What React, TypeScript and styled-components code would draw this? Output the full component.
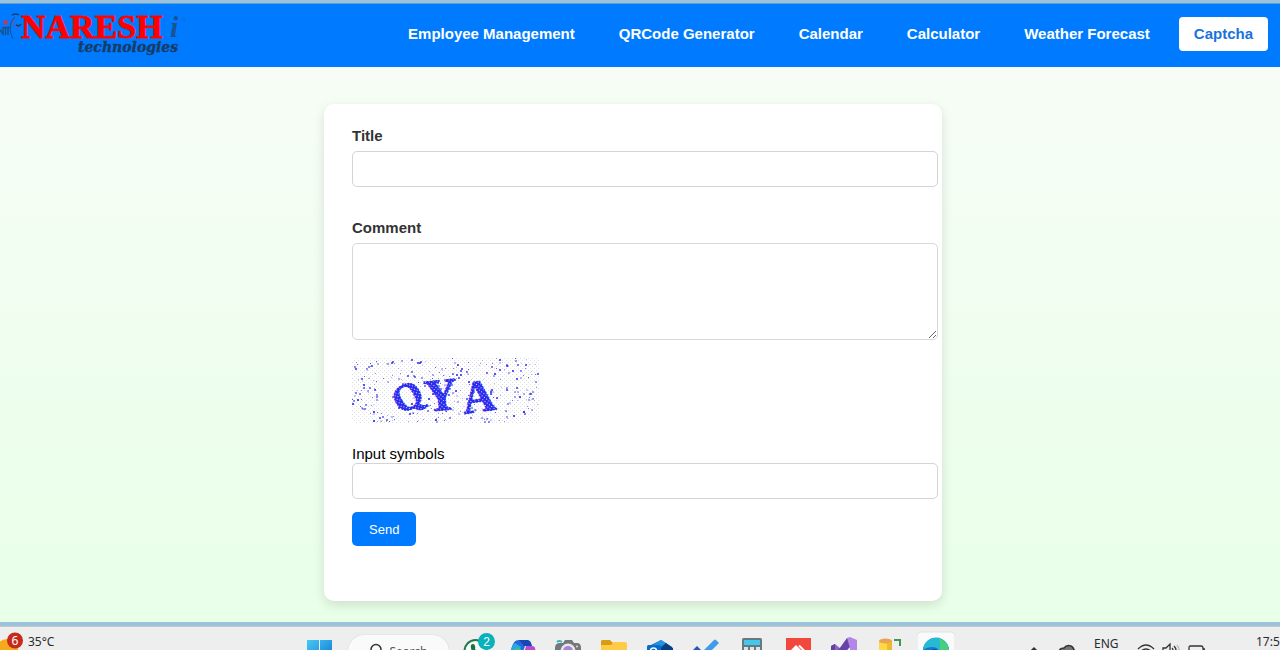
import React from "react";
import styled, { createGlobalStyle } from "styled-components";

const GlobalStyle = createGlobalStyle`
  *, *::before, *::after { box-sizing: border-box; }
  body {
    margin: 0;
    font-family: "Liberation Sans", Arial, sans-serif;
    font-size: 15px;
    color: #000;
  }
`;

const Screen = styled.div`
  min-height: 100vh;
  display: flex;
  flex-direction: column;
  overflow: hidden;
`;

const WindowEdge = styled.div<{ $size: number }>`
  flex: none;
  height: ${(p) => p.$size}px;
  background: #9dc3da;
  border-bottom: 1px solid ${(p) => (p.$size > 4 ? "#c3c8cb" : "#5a9fde")};
`;

const Header = styled.header`
  flex: none;
  display: flex;
  align-items: center;
  justify-content: space-between;
  height: 63px;
  padding-right: 12px;
  background: #007bff;
`;

const Nav = styled.nav`
  display: flex;
  gap: 14px;
  padding-bottom: 4px;
`;

const NavLink = styled.a<{ $active?: boolean }>`
  padding: 0 15px;
  line-height: 34px;
  border-radius: 4px;
  font-weight: bold;
  white-space: nowrap;
  text-decoration: none;
  color: ${(p) => (p.$active ? "#1a73dc" : "#fff")};
  background: ${(p) => (p.$active ? "#fff" : "transparent")};
`;

const Page = styled.main`
  flex: 1;
  padding: 37px 14px 21px 0;
  background: linear-gradient(#f7fdf6, #e8ffe8);
`;

const Card = styled.form`
  display: flex;
  flex-direction: column;
  max-width: 618px;
  min-height: 497px;
  margin: 0 auto;
  padding: 23px 4px 55px 28px;
  border-radius: 10px;
  background: #fff;
  box-shadow: 0 4px 12px rgba(0, 0, 0, 0.12);
`;

const Field = styled.div<{ $after: number }>`
  display: flex;
  flex-direction: column;
  margin-bottom: ${(p) => p.$after}px;
`;

const Label = styled.label<{ $strong?: boolean }>`
  line-height: 17px;
  margin-bottom: ${(p) => (p.$strong ? 7 : 1)}px;
  font-weight: ${(p) => (p.$strong ? "bold" : "normal")};
  color: ${(p) => (p.$strong ? "#333" : "#000")};
`;

const TextInput = styled.input`
  width: 100%;
  height: 36px;
  padding: 8px;
  border: 1px solid #d4d4d7;
  border-radius: 5px;
  background: #fff;
  font: inherit;
`;

const TextArea = styled.textarea`
  display: block;
  width: 100%;
  height: 97px;
  padding: 8px;
  border: 1px solid #d8d8dc;
  border-radius: 5px;
  font: inherit;
  resize: vertical;
`;

const CaptchaImage = styled.svg`
  display: block;
  width: 188px;
  height: 66px;
  margin-bottom: 21px;
`;

const SendButton = styled.button`
  align-self: flex-start;
  height: 34px;
  padding: 0 17px;
  border: 0;
  border-radius: 5px;
  background: #007bff;
  color: #fff;
  font-family: inherit;
  font-size: 13px;
`;

const Taskbar = styled.footer`
  flex: none;
  display: flex;
  align-items: flex-start;
  height: 23px;
  overflow: hidden;
  background: #eee;
  color: #2b2b2b;
  font-family: "Noto Sans", "Open Sans", sans-serif;
  font-size: 12px;
`;

const Weather = styled.div`
  flex: 300 1 0;
  display: flex;
  gap: 4px;
  line-height: 30px;
`;

const Apps = styled.div`
  flex: none;
  display: flex;
  gap: 8px;
`;

const AppButton = styled.button`
  width: 38px;
  height: 40px;
  padding: 0;
  border: 0;
  background: none;
`;

const SearchPill = styled.label`
  display: flex;
  align-items: flex-start;
  gap: 6px;
  width: 101px;
  height: 32px;
  margin: 8px 0 0 2px;
  padding: 8px 10px 0 20px;
  border-radius: 16px;
  background: #fafafa;
  box-shadow: 0 0 1px #bbb;
`;

const SearchInput = styled.input`
  width: 60px;
  height: 16px;
  padding: 0;
  border: 0;
  background: none;
  font: inherit;
  color: #555;
  &::placeholder { color: #555; }
`;

const Tray = styled.div`
  flex: 326 1 0;
  display: flex;
  justify-content: flex-end;
  line-height: 34px;
  white-space: nowrap;
`;

const Language = styled.span`
  width: 26px;
  margin: 0 17px 0 19px;
`;

const Clock = styled.time`
  width: 24px;
  margin-left: 51px;
  line-height: 30px;
  overflow: hidden;
`;

const Glyph = styled.svg`
  display: block;
  flex: none;
`;

function Logo() {
  return (
    <Glyph width="190" height="63" viewBox="0 4 190 63" role="img" aria-label="Naresh i Technologies">
      <g fill="none" stroke="#17508c" strokeWidth="1.500">
        <path d="M-2 34V27l5 7V27M3 27.500h7M5.500 28v7M8 28v7" />
        <path d="M15 17c-6 5-6 14-2 22" strokeWidth="1" />
        <path d="M12 15q4-2 7 0" stroke="#123d70" />
        <path d="M16 25l3 1 2-2" stroke="#123d70" />
      </g>
      <path d="M3.500 20.500h4.500v4H3.500z" fill="#b63a62" />
      <path d="M12 22l2 3M14 19v3M15 27l3 1" stroke="#a04478" fill="none" />
      <text x="21" y="38" fill="#ff0000" stroke="#ff0000" strokeWidth="0.800" fontFamily="Liberation Serif, serif" fontWeight="bold" fontSize="34">NARESH</text>
      <text x="170" y="37" fill="#175593" fontFamily="Liberation Serif, serif" fontWeight="bold" fontStyle="italic" fontSize="30">i</text>
      <circle cx="183.500" cy="19.500" r="1.500" fill="none" stroke="#1767b8" strokeWidth="0.800" />
      <text x="78" y="52" fill="#183c68" stroke="#183c68" strokeWidth="0.400" fontFamily="DejaVu Serif, serif" fontWeight="bold" fontStyle="italic" fontSize="14">technologies</text>
    </Glyph>
  );
}

type Speck = { x: number; y: number; size: number; opacity: number };

// Small seeded generator so that the noise is the same on each render.
function makeSpecks(count: number): Speck[] {
  let seed = 90217;
  const next = () => {
    seed = (seed * 16807) % 2147483647;
    return seed / 2147483647;
  };
  return Array.from({ length: count }, () => ({
    x: Math.floor(next() * 186),
    y: Math.floor(next() * 64),
    size: next() > 0.5 ? 2 : 1,
    opacity: 0.2 + next() * 0.6,
  }));
}

const specks = makeSpecks(330);

function Captcha() {
  return (
    <CaptchaImage viewBox="0 0 188 66" role="img" aria-label="Captcha symbols">
      <defs>
        <pattern id="grain" width="4" height="4" patternUnits="userSpaceOnUse">
          <path d="M0 0h1v1H0zM2 2h1v1H2z" fill="#dedee6" />
        </pattern>
        <pattern id="weave" width="4" height="4" patternUnits="userSpaceOnUse">
          <path d="M0 0h4v4H0z" fill="#2a2af0" />
          <path d="M0 0h1v1H0zM2 2h1v1H2z" fill="#dcdcff" />
        </pattern>
      </defs>
      <rect width="188" height="66" rx="5" fill="url(#grain)" />
      {specks.map((s, i) => (
        <rect key={i} x={s.x} y={s.y} width={s.size} height={s.size} fill="#2424e6" opacity={s.opacity} />
      ))}
      <g fill="url(#weave)" stroke="#2424e6" strokeWidth="1" strokeDasharray="2 1" fontFamily="Liberation Serif, serif" fontWeight="bold">
        <text fontSize="38" transform="translate(49 57) rotate(-30)">Q</text>
        <text fontSize="46" transform="translate(74 54) rotate(-6)">Y</text>
        <text fontSize="46" transform="translate(112 56) rotate(-8)">A</text>
      </g>
    </CaptchaImage>
  );
}

const appIcons: { name: string; art: React.ReactNode }[] = [
  {
    name: "WhatsApp",
    art: (
      <>
        <circle cx="18.500" cy="24" r="11" fill="#f5faf5" stroke="#23784a" strokeWidth="2" />
        <path d="M14 18c3-3 5 1 4 4l4 5c-6 1-9-5-8-9z" fill="#1d7044" />
        <circle cx="29.500" cy="14.500" r="8.500" fill="#06b2bb" />
        <text x="29.500" y="19" textAnchor="middle" fill="#fff" fontSize="12">2</text>
      </>
    ),
  },
  {
    name: "Copilot",
    art: (
      <>
        <path d="M7 28c2-11 4-15 9-15h8l-6 18z" fill="#2468dc" />
        <path d="M7 28c1-7 3-11 5-12l6 4-4 10z" fill="#28a9e0" />
        <path d="M9 28l4-7 5 1-3 7z" fill="#45c07a" />
        <path d="M16 13h8c3 0 4 2 5 6h-8z" fill="#1746b5" />
        <path d="M23 19h6c4 0 4 4 2 11h-11z" fill="#b94bd2" />
      </>
    ),
  },
  {
    name: "Camera",
    art: (
      <>
        <path d="M8 15q2-2 5 0" stroke="#40b4c0" strokeWidth="2" fill="none" />
        <path d="M6 21q0-5 5-5h3l2-3h7l2 3h3q4 0 4 5v12H6z" fill="#73787d" />
        <circle cx="19" cy="24" r="7.500" fill="#e7e7ed" />
        <circle cx="19" cy="24" r="5" fill="#a783d3" />
        <circle cx="28" cy="19.500" r="1" fill="#ddd" />
      </>
    ),
  },
  {
    name: "File Explorer",
    art: (
      <>
        <path d="M6 14q0-1 2-1h7l3 3v6H6z" fill="#d99b16" />
        <path d="M6 18h10l3-3h11q2 0 2 2v18H6z" fill="#fdcb45" />
      </>
    ),
  },
  {
    name: "Outlook",
    art: (
      <>
        <path d="M8 19l12-6 11 7v14H8z" fill="#1269bd" />
        <path d="M10 19l10-6 5 3-10 7z" fill="#2492df" />
        <path d="M20 21l5-5 7 5v12H20z" fill="#073f83" />
        <rect x="6" y="18" width="14" height="15" rx="1.500" fill="#0a6bcc" />
        <circle cx="12.500" cy="24" r="3" fill="none" stroke="#fff" strokeWidth="1.500" />
      </>
    ),
  },
  {
    name: "To Do",
    art: (
      <>
        <path d="M6 23l4-4 9 9-4 4z" fill="#2456bd" />
        <path d="M13 27l14-14q1-1 2 0l3 3-16 16z" fill="#429bea" />
      </>
    ),
  },
  {
    name: "Calculator",
    art: (
      <>
        <rect x="9" y="11" width="20" height="28" rx="1.500" fill="#6b7780" />
        <path d="M11 13h16v5H11z" fill="#42c8e9" />
        <path d="M11 20h4v4h-4zM17 20h4v4h-4zM23 20h4v4h-4z" fill="#dbe5e8" />
      </>
    ),
  },
  {
    name: "AnyDesk",
    art: (
      <>
        <path d="M7 11h25v26H7z" fill="#f2473c" />
        <path d="M17 18l7 7-7 7-7-7z" fill="#fff" />
        <path d="M20 18.500l6.500 6.500-5 5" fill="none" stroke="#fff" strokeWidth="2" />
      </>
    ),
  },
  {
    name: "Visual Studio",
    art: (
      <>
        <path d="M6 19l4-2 20 17-5 3z" fill="#8d63c9" />
        <path d="M6 19l4-2v17l-4-2z" fill="#65418f" />
        <path d="M9 29l13-18h3v9L12 34z" fill="#6742a8" />
        <path d="M22 11l3-1 7 3v20l-7 4V21z" fill="#b287e8" />
      </>
    ),
  },
  {
    name: "SQL Server",
    art: (
      <>
        <path d="M8 14h13v22H8z" fill="#ffd747" />
        <path d="M16 14h5v22h-5z" fill="#eebb2c" />
        <ellipse cx="14.500" cy="14" rx="6.500" ry="2.500" fill="#e8a551" />
        <path d="M23 13h6v6" fill="none" stroke="#3e9652" strokeWidth="2" />
      </>
    ),
  },
  {
    name: "Edge",
    art: (
      <>
        <rect x="0" y="5" width="38" height="36" rx="4" fill="#fafafa" stroke="#e2e2e2" />
        <circle cx="19" cy="24" r="13" fill="#1479cc" />
        <path d="M6 23a13 13 0 0 1 26 1c0 5-3 7-8 6-4-1-2-3-2-5 0-5-8-7-16-2z" fill="#26b8d4" />
        <path d="M22 11.500a13 13 0 0 1 10 13c-1 5-4 6-8 5-3-1-2-2-2-4 2-4 1-9 0-14z" fill="#47cf7b" />
        <path d="M13 25q3-5 8-2l-1 8z" fill="#0d4d9c" />
      </>
    ),
  },
];

const links = ["Employee Management", "QRCode Generator", "Calendar", "Calculator", "Weather Forecast", "Captcha"];

export default function App() {
  return (
    <Screen>
      <GlobalStyle />
      <WindowEdge $size={4} />
      <Header>
        <Logo />
        <Nav>
          {links.map((name) => (
            <NavLink key={name} href="#" $active={name === "Captcha"}>
              {name}
            </NavLink>
          ))}
        </Nav>
      </Header>
      <Page>
        <Card onSubmit={(e) => e.preventDefault()}>
          <Field $after={32}>
            <Label $strong htmlFor="title">Title</Label>
            <TextInput id="title" type="text" />
          </Field>
          <Field $after={18}>
            <Label $strong htmlFor="comment">Comment</Label>
            <TextArea id="comment" />
          </Field>
          <Captcha />
          <Field $after={13}>
            <Label htmlFor="symbols">Input symbols</Label>
            <TextInput id="symbols" type="text" />
          </Field>
          <SendButton type="submit">Send</SendButton>
        </Card>
      </Page>
      <WindowEdge $size={5} />
      <Taskbar>
        <Weather>
          <Glyph width="24" height="30" viewBox="0 0 24 30">
            <circle cx="7" cy="23" r="11" fill="#f7a81b" />
            <circle cx="15" cy="13.500" r="8" fill="#c42b1c" />
            <text x="15" y="18" textAnchor="middle" fill="#fff" fontSize="12">6</text>
          </Glyph>
          35°C
        </Weather>
        <Apps>
          <AppButton aria-label="Start">
            <Glyph width="38" height="40" viewBox="0 0 38 40">
              <defs>
                <linearGradient id="start" x1="0" y1="0" x2="1" y2="1">
                  <stop offset="0" stopColor="#49c7f5" />
                  <stop offset="1" stopColor="#0a74d0" />
                </linearGradient>
              </defs>
              <path d="M7 13h12v11H7zM20 13h12v11H20zM7 25h12v11H7zM20 25h12v11H20z" fill="url(#start)" />
            </Glyph>
          </AppButton>
          <SearchPill>
            <Glyph width="16" height="18" viewBox="0 0 16 18" fill="none" stroke="#333" strokeWidth="1.500">
              <circle cx="8" cy="6.500" r="5" />
              <path d="M4.500 10.500L1 15" />
            </Glyph>
            <SearchInput type="text" placeholder="Search" aria-label="Search" />
          </SearchPill>
          {appIcons.map((app) => (
            <AppButton key={app.name} aria-label={app.name}>
              <Glyph width="38" height="40" viewBox="0 0 38 40">
                {app.art}
              </Glyph>
            </AppButton>
          ))}
        </Apps>
        <Tray>
          <Glyph width="48" height="34" viewBox="0 0 48 34" fill="none" stroke="#333" strokeWidth="1.500">
            <path d="M2 26l5-5 5 5" />
            <path d="M32 26c0-4 3-5 5-5 3-4 9-3 10 2 2 1 2 4 0 5H32z" fill="#777" />
          </Glyph>
          <Language>ENG</Language>
          <Glyph width="68" height="34" viewBox="0 0 68 34" fill="none" stroke="#333" strokeWidth="1.300">
            <path d="M1 22q8-8 16 0M3.500 24.500q5.500-5 11 0M6 27q3-3 6 0" />
            <path d="M26 21h3l4-4v13l-4-4h-3zM35 21q2 2 0 5M37 19q4 4 0 9" />
            <path d="M40 18q4 5 1 11" stroke="#bbb" />
            <path d="M53 19h11q2 0 2 2v7H53q-1 0-1-2v-5q0-2 1-2zM66 22h2v4h-2" />
          </Glyph>
          <Clock>17:5</Clock>
        </Tray>
      </Taskbar>
    </Screen>
  );
}
